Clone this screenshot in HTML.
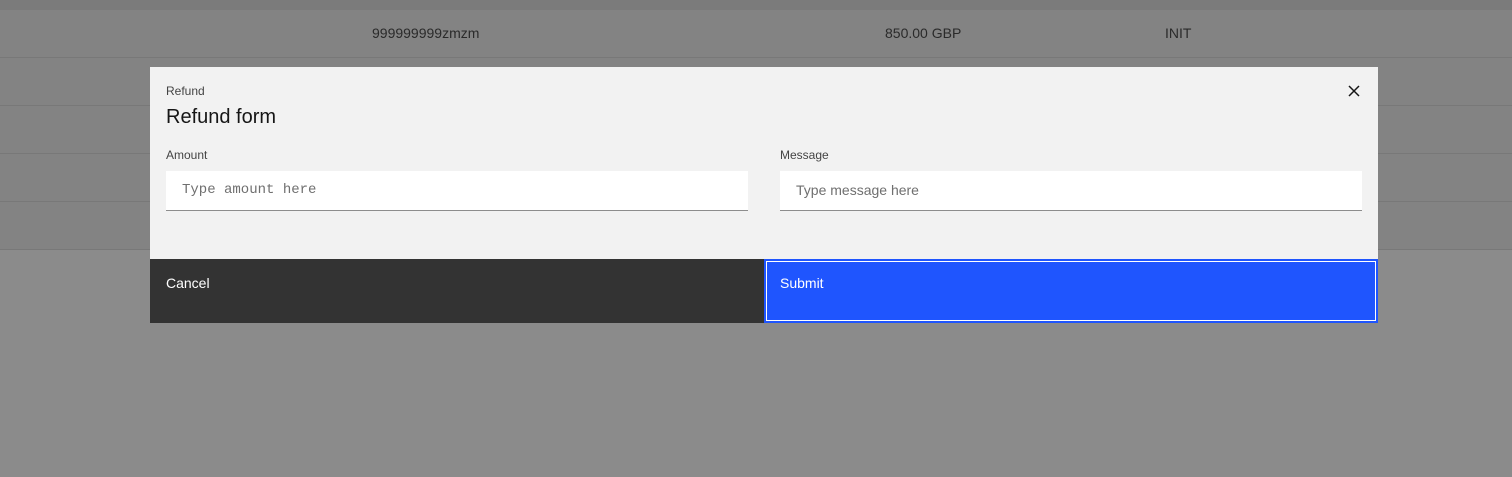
<!DOCTYPE html>
<html><head><style>
body{margin:0;width:1512px;height:477px;background:#8b8b8b;font-family:"Liberation Sans",sans-serif;position:relative;overflow:hidden}
.top{position:absolute;left:0;top:0;width:1512px;height:10px;background:#7b7b7b}
.rows{position:absolute;left:0;top:10px;width:1512px;height:240px;background:#838383}
.line{position:absolute;left:0;width:1512px;height:1px;background:#787878}
.t{position:absolute;top:25px;font-size:14px;color:#2a2a2a}
.modal{position:absolute;left:150px;top:67px;width:1228px;height:256px;background:#f2f2f2}
.lbl{position:absolute;font-size:12px;color:#444}
.inp{position:absolute;top:104px;width:582px;height:40px;background:#fff;border-bottom:1px solid #8d8d8d;font-size:14px;color:#6f6f6f;line-height:39px;box-sizing:border-box;padding-left:16px}
.cancel{position:absolute;left:0;top:192px;width:614px;height:64px;background:#333;color:#fff;font-size:14px;box-sizing:border-box;padding:16px}
.submit{position:absolute;left:614px;top:192px;width:614px;height:64px;background:#1f55fe;border:2px solid #1f55fe;box-shadow:inset 0 0 0 1px #fff;box-sizing:border-box;color:#fff;font-size:14px;padding:14px 14px}
</style></head><body>
<div class="top"></div>
<div class="rows"></div>
<div class="line" style="top:57px"></div>
<div class="line" style="top:105px"></div>
<div class="line" style="top:153px"></div>
<div class="line" style="top:201px"></div>
<div class="line" style="top:249px"></div>
<div class="t" style="left:372px">999999999zmzm</div>
<div class="t" style="left:885px">850.00 GBP</div>
<div class="t" style="left:1165px">INIT</div>
<div class="modal">
<div class="lbl" style="left:16px;top:17px">Refund</div>
<div style="position:absolute;left:16px;top:39px;font-size:20px;color:#161616">Refund form</div>
<svg style="position:absolute;left:1198px;top:18px" width="12" height="12" viewBox="0 0 12 12"><path d="M1 1L11 11M11 1L1 11" stroke="#161616" stroke-width="1.5"/></svg>
<div class="lbl" style="left:16px;top:81px">Amount</div>
<div class="lbl" style="left:630px;top:81px">Message</div>
<div class="inp" style="left:16px;font-family:'Liberation Mono',monospace">Type amount here</div>
<div class="inp" style="left:630px">Type message here</div>
<div class="cancel">Cancel</div>
<div class="submit">Submit</div>
</div>
</body></html>
